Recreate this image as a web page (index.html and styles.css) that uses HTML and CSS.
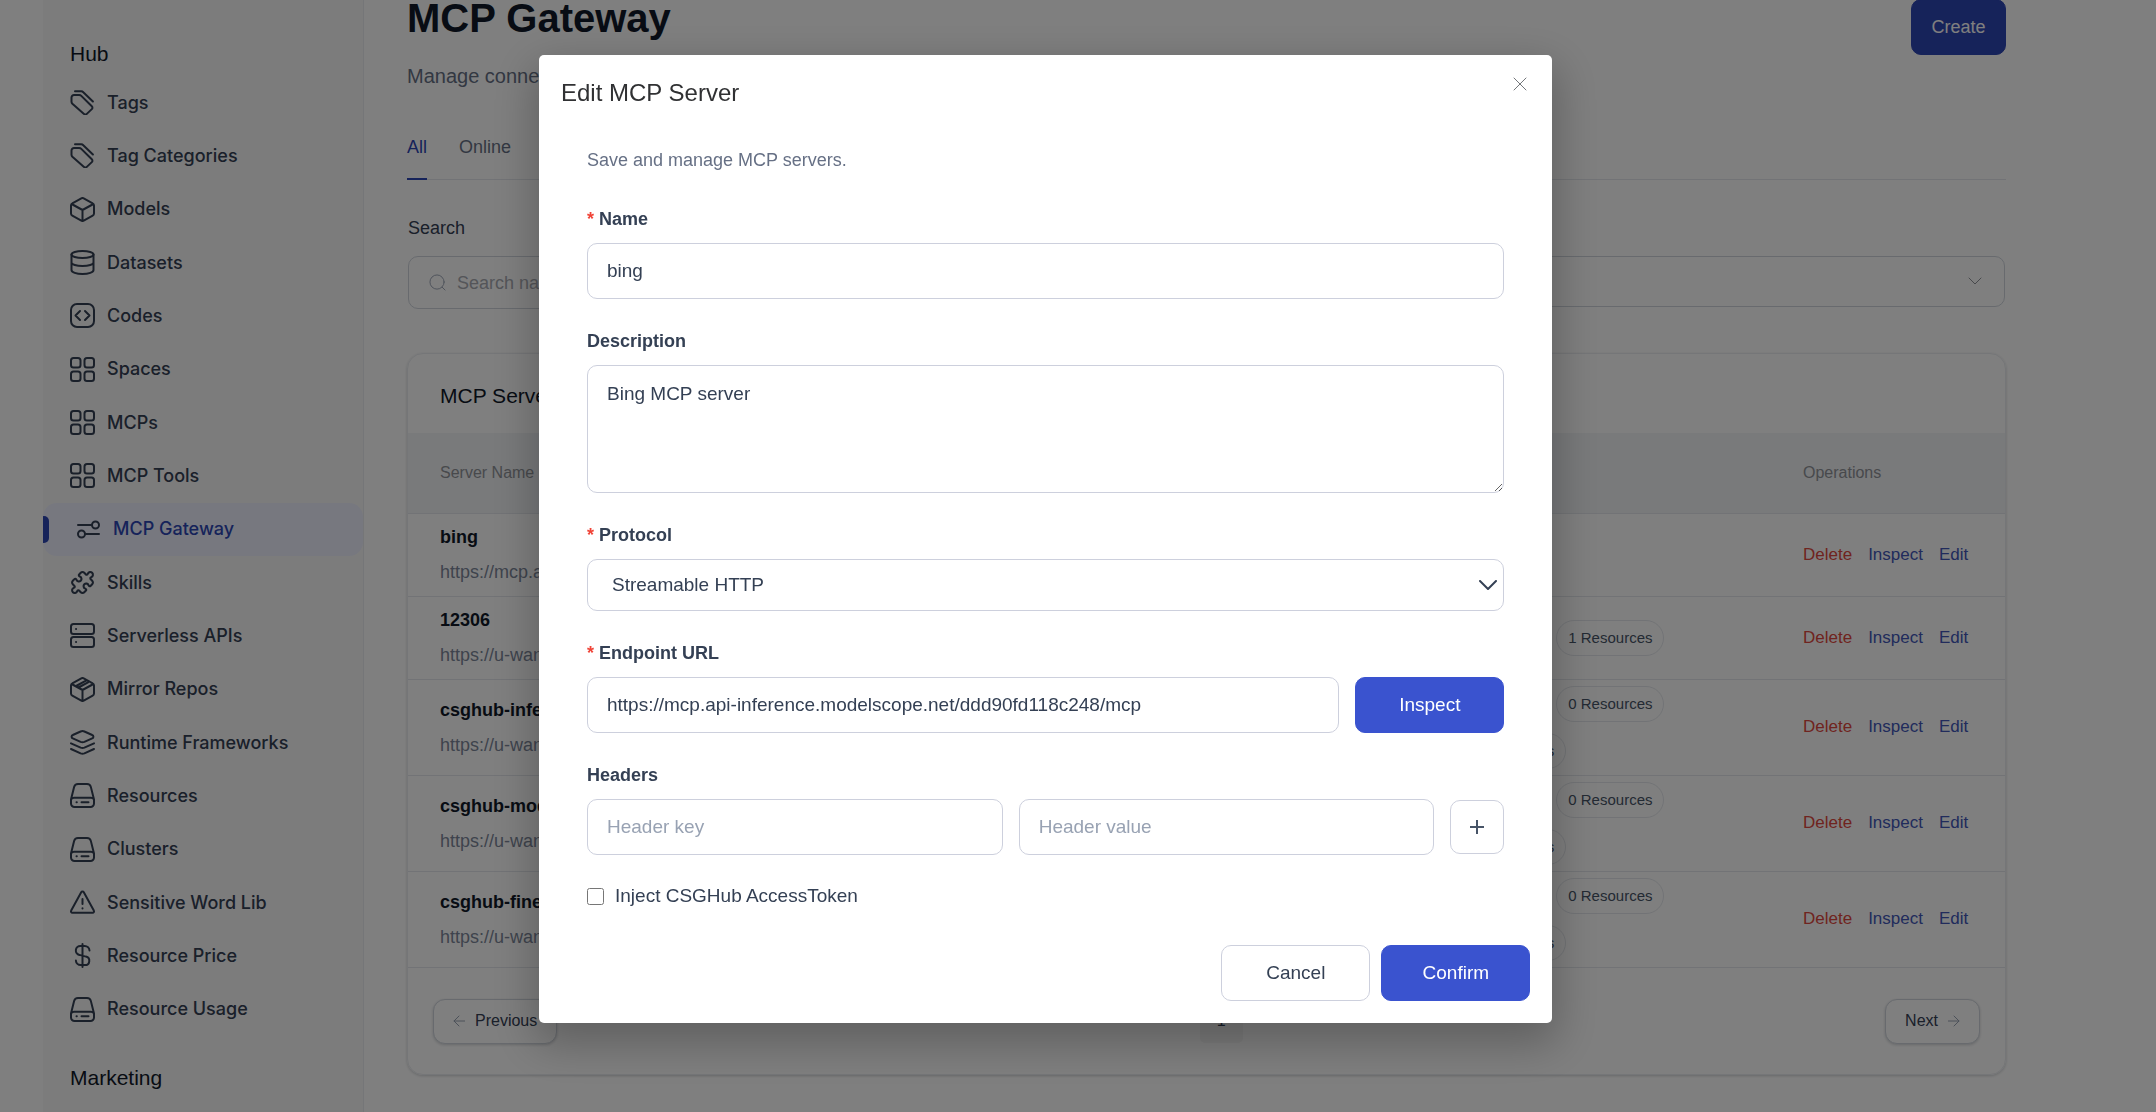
FILE: index.html
```html
<!DOCTYPE html>
<html lang="en">
<head>
<meta charset="utf-8">
<meta name="viewport" content="width=device-width, initial-scale=1">
<title>MCP Gateway</title>
<link rel="stylesheet" href="styles.css">
</head>
<body>
<svg class="sprite" aria-hidden="true">
  <symbol id="i-tag" viewBox="0 0 25 25"><path d="M1.5 7.5A2.5 2.5 0 0 1 4 5h5.2a3 3 0 0 1 2.1.9l10.5 10.3a2 2 0 0 1 0 2.9l-5 4.8a2 2 0 0 1-2.8 0L2.4 13.8a3 3 0 0 1-.9-2.1zM5 1.3h6.2a3 3 0 0 1 2.1.9l9.6 9.3"/></symbol>
  <symbol id="i-cube" viewBox="0 0 25 25"><path d="M11.3 1.3a2.5 2.5 0 0 1 2.4 0l9 5a2.4 2.4 0 0 1 1.3 2.1v8.2a2.4 2.4 0 0 1-1.3 2.1l-9 5a2.5 2.5 0 0 1-2.4 0l-9-5A2.4 2.4 0 0 1 1 16.600V8.400a2.400 2.400 0 0 1 1.300-2.100zM1.600 7l10.900 6 10.900-6M12.500 13v11.300"/></symbol>
  <symbol id="i-box" viewBox="0 0 25 25"><path d="M11.300 1.300a2.500 2.500 0 0 1 2.400 0l9 5a2.400 2.400 0 0 1 1.300 2.100v8.200a2.400 2.400 0 0 1-1.300 2.100l-9 5a2.500 2.500 0 0 1-2.400 0l-9-5A2.400 2.400 0 0 1 1 16.600V8.400a2.400 2.400 0 0 1 1.300-2.100zM1.600 7l10.900 6 10.900-6M12.500 13v11.300M7 9.800v-1.300L17 3.200M7 9.800l1.500.7 9.500-5.200"/></symbol>
  <symbol id="i-data" viewBox="0 0 25 25"><ellipse cx="12.500" cy="4.500" rx="11" ry="3.500"/><path d="M1.500 4.500v15.500c0 2.300 4.900 4 11 4s11-1.700 11-4V4.500M1.500 12.500c0 2 4.900 3.600 11 3.600s11-1.600 11-3.600"/></symbol>
  <symbol id="i-code" viewBox="0 0 25 25"><rect x="1" y="1" width="23" height="23" rx="6"/><path d="M10 8l-4.500 4.500L10 17M15 8l4.500 4.500L15 17"/></symbol>
  <symbol id="i-grid" viewBox="0 0 25 25"><rect x="1" y="1" width="9.500" height="9.500" rx="2.500"/><rect x="14.500" y="1" width="9.500" height="9.500" rx="2.500"/><rect x="1" y="14.500" width="9.500" height="9.500" rx="2.500"/><rect x="14.500" y="14.500" width="9.500" height="9.500" rx="2.500"/></symbol>
  <symbol id="i-sliders" viewBox="0 0 25 25"><circle cx="19.500" cy="8" r="3.500"/><circle cx="5.500" cy="17" r="3.500"/><path d="M2 8h14M9 17h14"/></symbol>
  <symbol id="i-puzzle" viewBox="0 0 24 24"><path d="M19.439 7.850c-.049.322.059.648.289.878l1.568 1.568c.470.470.706 1.087.706 1.704s-.235 1.233-.706 1.704l-1.611 1.611a.980.980 0 0 1-.837.276c-.470-.070-.802-.480-.968-.925a2.501 2.501 0 1 0-3.214 3.214c.446.166.855.497.925.968a.979.979 0 0 1-.276.837l-1.610 1.610a2.404 2.404 0 0 1-1.705.707 2.402 2.402 0 0 1-1.704-.706l-1.568-1.568a1.026 1.026 0 0 0-.877-.290c-.493.074-.840.504-1.020.968a2.500 2.500 0 1 1-3.237-3.237c.464-.180.894-.527.967-1.020a1.026 1.026 0 0 0-.289-.877l-1.568-1.568A2.402 2.402 0 0 1 1.998 12c0-.617.236-1.234.706-1.704L4.230 8.770c.240-.240.581-.353.917-.303.515.077.877.528 1.073 1.010a2.500 2.500 0 1 0 3.259-3.259c-.482-.196-.933-.558-1.010-1.073-.050-.336.062-.676.303-.917l1.525-1.525A2.402 2.402 0 0 1 12 1.998c.617 0 1.234.236 1.704.706l1.568 1.568c.230.230.556.338.877.290.493-.074.840-.504 1.020-.968a2.500 2.500 0 1 1 3.237 3.237c-.464.180-.894.527-.967 1.020Z"/></symbol>
  <symbol id="i-server" viewBox="0 0 25 25"><rect x="1" y="1" width="23" height="10" rx="2.500"/><rect x="1" y="14" width="23" height="10" rx="2.500"/><path d="M6 6h.1M6 19h.1"/></symbol>
  <symbol id="i-layers" viewBox="0 0 25 25"><path d="M10.600 1.500a5 5 0 0 1 3.800 0l7.800 3.500a1.800 1.800 0 0 1 0 3.400l-7.800 3.500a5 5 0 0 1-3.800 0L2.800 8.400a1.800 1.800 0 0 1 0-3.400zM1 13.300l9.600 4.400a5 5 0 0 0 3.800 0L24 13.300M1 19l9.600 4.400a5 5 0 0 0 3.800 0L24 19"/></symbol>
  <symbol id="i-drive" viewBox="0 0 25 25"><path d="M1 16.500L4.100 4.100A4 4 0 0 1 8 1h9a4 4 0 0 1 3.900 3.100L24 16.500v4a3.500 3.500 0 0 1-3.500 3.500h-16A3.500 3.500 0 0 1 1 20.500zM1.500 16A3 3 0 0 1 4 14.700h17a3 3 0 0 1 2.500 1.300M6.500 19.300h.3M11.500 19.300h7"/></symbol>
  <symbol id="i-alert" viewBox="0 0 25 25"><path d="M11.200 2.200a1.500 1.500 0 0 1 2.600 0L23.800 20.500a1.400 1.400 0 0 1-1.200 2.200H2.400a1.400 1.400 0 0 1-1.200-2.200zM12.500 9v5M12.500 18.300v.1"/></symbol>
  <symbol id="i-dollar" viewBox="0 0 25 25"><path d="M12.500 1v23M19.500 7.500a4.800 4.800 0 0 0-4.800-4.500h-4.200a4.500 4.500 0 0 0-1.100 8.900l6.500 1.700a4.300 4.300 0 0 1-1 8.500h-4.200a4.800 4.800 0 0 1-4.800-4.500"/></symbol>
</svg>

<div class="page">
  <nav class="sidebar" aria-label="Admin">
    <h2 class="nav-title">Hub</h2>
    <ul class="nav-list">
      <li><a class="nav-link" href="#tags"><svg class="icon"><use href="#i-tag"/></svg>Tags</a></li>
      <li><a class="nav-link" href="#tag-categories"><svg class="icon"><use href="#i-tag"/></svg>Tag Categories</a></li>
      <li><a class="nav-link" href="#models"><svg class="icon"><use href="#i-cube"/></svg>Models</a></li>
      <li><a class="nav-link" href="#datasets"><svg class="icon"><use href="#i-data"/></svg>Datasets</a></li>
      <li><a class="nav-link" href="#codes"><svg class="icon"><use href="#i-code"/></svg>Codes</a></li>
      <li><a class="nav-link" href="#spaces"><svg class="icon"><use href="#i-grid"/></svg>Spaces</a></li>
      <li><a class="nav-link" href="#mcps"><svg class="icon"><use href="#i-grid"/></svg>MCPs</a></li>
      <li><a class="nav-link" href="#mcp-tools"><svg class="icon"><use href="#i-grid"/></svg>MCP Tools</a></li>
      <li><a class="nav-link active" href="#mcp-gateway" aria-current="page"><svg class="icon"><use href="#i-sliders"/></svg>MCP Gateway</a></li>
      <li><a class="nav-link" href="#skills"><svg class="icon"><use href="#i-puzzle"/></svg>Skills</a></li>
      <li><a class="nav-link" href="#serverless"><svg class="icon"><use href="#i-server"/></svg>Serverless APIs</a></li>
      <li><a class="nav-link" href="#mirror"><svg class="icon"><use href="#i-box"/></svg>Mirror Repos</a></li>
      <li><a class="nav-link" href="#runtime"><svg class="icon"><use href="#i-layers"/></svg>Runtime Frameworks</a></li>
      <li><a class="nav-link" href="#resources"><svg class="icon"><use href="#i-drive"/></svg>Resources</a></li>
      <li><a class="nav-link" href="#clusters"><svg class="icon"><use href="#i-drive"/></svg>Clusters</a></li>
      <li><a class="nav-link" href="#words"><svg class="icon"><use href="#i-alert"/></svg>Sensitive Word Lib</a></li>
      <li><a class="nav-link" href="#price"><svg class="icon"><use href="#i-dollar"/></svg>Resource Price</a></li>
      <li><a class="nav-link" href="#usage"><svg class="icon"><use href="#i-drive"/></svg>Resource Usage</a></li>
    </ul>
    <h2 class="nav-title">Marketing</h2>
  </nav>

  <main class="main">
    <header class="head">
      <div>
        <h1 class="title">MCP Gateway</h1>
        <p class="subtitle">Manage connections</p>
      </div>
      <button class="btn primary create" type="button">Create</button>
    </header>
    <div class="tabs" role="tablist">
      <button class="tab on" type="button" role="tab" aria-selected="true">All</button>
      <button class="tab" type="button" role="tab" aria-selected="false">Online</button>
    </div>
    <div class="filters">
      <div class="filter">
        <label class="filter-label" for="search">Search</label>
        <div class="search">
          <svg class="search-icon" viewBox="0 0 18 18"><circle cx="8.500" cy="8.500" r="7.500"/><path d="M14 14l3 3"/></svg>
          <input class="search-input" id="search" type="search" placeholder="Search name">
        </div>
      </div>
      <div class="filter">
        <label class="filter-label" for="protocol-filter">Protocol</label>
        <div class="select-wrap">
          <select class="filter-select" id="protocol-filter"><option>All</option></select>
          <svg class="chev thin" viewBox="0 0 14 8"><path d="M1 1l6 6 6-6"/></svg>
        </div>
      </div>
    </div>

    <section class="card">
      <h2 class="card-title">MCP Servers</h2>
      <table class="table">
        <colgroup><col><col class="c-caps"><col class="c-ops"></colgroup>
        <thead><tr><th>Server Name</th><th>Items</th><th>Operations</th></tr></thead>
        <tbody>
          <tr><td><strong class="name">bing</strong><span class="url">https://mcp.api-inference.modelscope.net</span></td><td><div class="tags"><span class="tag">1 Tools</span></div></td><td><div class="ops"><a class="danger" href="#delete">Delete</a><a href="#inspect">Inspect</a><a href="#edit">Edit</a></div></td></tr>
          <tr><td><strong class="name">12306</strong><span class="url">https://u-wanghh</span></td><td><div class="tags"><span class="tag">8 Tools</span><span class="tag">1 Resources</span></div></td><td><div class="ops"><a class="danger" href="#delete">Delete</a><a href="#inspect">Inspect</a><a href="#edit">Edit</a></div></td></tr>
          <tr class="tall"><td><strong class="name">csghub-inference</strong><span class="url">https://u-wanghh</span></td><td><div class="tags"><span class="tag">8 Tools</span><span class="tag">0 Resources</span><span class="tag">0 Prompts</span></div></td><td><div class="ops"><a class="danger" href="#delete">Delete</a><a href="#inspect">Inspect</a><a href="#edit">Edit</a></div></td></tr>
          <tr class="tall"><td><strong class="name">csghub-model</strong><span class="url">https://u-wanghh</span></td><td><div class="tags"><span class="tag">8 Tools</span><span class="tag">0 Resources</span><span class="tag">0 Prompts</span></div></td><td><div class="ops"><a class="danger" href="#delete">Delete</a><a href="#inspect">Inspect</a><a href="#edit">Edit</a></div></td></tr>
          <tr class="tall"><td><strong class="name">csghub-finetune</strong><span class="url">https://u-wanghh</span></td><td><div class="tags"><span class="tag">8 Tools</span><span class="tag">0 Resources</span><span class="tag">0 Prompts</span></div></td><td><div class="ops"><a class="danger" href="#delete">Delete</a><a href="#inspect">Inspect</a><a href="#edit">Edit</a></div></td></tr>
        </tbody>
      </table>
      <div class="pager">
        <button class="page-btn" type="button"><svg class="arrow" viewBox="0 0 12 12"><path d="M12 6H1M6 1L1 6l5 5"/></svg>Previous</button>
        <button class="page-num" type="button">1</button>
        <button class="page-btn" type="button">Next<svg class="arrow" viewBox="0 0 12 12"><path d="M0 6h11M6 1l5 5-5 5"/></svg></button>
      </div>
    </section>
  </main>
</div>

<div class="overlay">
  <div class="dialog" role="dialog" aria-modal="true" aria-labelledby="dialog-title">
    <header class="dialog-head">
      <h2 class="dialog-title" id="dialog-title">Edit MCP Server</h2>
      <button class="close" type="button" aria-label="Close"><svg class="close-icon" viewBox="0 0 14 14"><path d="M1 1l12 12M13 1L1 13"/></svg></button>
    </header>
    <form class="form">
      <p class="intro">Save and manage MCP servers.</p>
      <div class="field">
        <label class="label required" for="name">Name</label>
        <input class="input" id="name" type="text" value="bing">
      </div>
      <div class="field">
        <label class="label" for="description">Description</label>
        <textarea class="input area" id="description">Bing MCP server</textarea>
      </div>
      <div class="field">
        <label class="label required" for="protocol">Protocol</label>
        <div class="select-wrap">
          <select class="input select" id="protocol"><option>Streamable HTTP</option><option>SSE</option></select>
          <svg class="chev" viewBox="0 0 18 10"><path d="M1 1l8 8 8-8"/></svg>
        </div>
      </div>
      <div class="field">
        <label class="label required" for="endpoint">Endpoint URL</label>
        <div class="row">
          <input class="input" id="endpoint" type="text" value="https://mcp.api-inference.modelscope.net/ddd90fd118c248/mcp">
          <button class="btn primary" type="button">Inspect</button>
        </div>
      </div>
      <div class="field">
        <label class="label" for="header-key">Headers</label>
        <div class="row">
          <input class="input" id="header-key" type="text" placeholder="Header key">
          <input class="input" type="text" placeholder="Header value" aria-label="Header value">
          <button class="add" type="button" aria-label="Add header"><svg class="add-icon" viewBox="0 0 14 14"><path d="M7 0v14M0 7h14"/></svg></button>
        </div>
      </div>
      <div class="check">
        <input class="check-box" id="inject" type="checkbox">
        <label for="inject">Inject CSGHub AccessToken</label>
      </div>
    </form>
    <footer class="dialog-foot">
      <button class="btn" type="button">Cancel</button>
      <button class="btn primary" type="button">Confirm</button>
    </footer>
  </div>
</div>
</body>
</html>
```
FILE: styles.css
```css
* { box-sizing: border-box; }

body {
  margin: 0;
  height: 100vh;
  overflow: hidden;
  background: #fff;
  color: #344054;
  font-family: "Liberation Sans", Arial, sans-serif;
  font-size: 18px;
  line-height: 24px;
}

h1, h2, p, ul { margin: 0; padding: 0; font-weight: 400; }
ul { list-style: none; }
a { color: inherit; text-decoration: none; }
button, input, select, textarea { font: inherit; color: inherit; }
button { cursor: pointer; }
svg { fill: none; stroke: currentColor; stroke-width: 2; stroke-linecap: round; stroke-linejoin: round; flex: none; }

.sprite { position: absolute; width: 0; height: 0; }

.page { display: flex; min-height: 100vh; padding-left: 43px; }

/* Sidebar */
.sidebar {
  flex: none;
  width: 321px;
  padding-top: 38px;
  background: #f9f9f9;
  border-right: 1px solid #eaecf0;
}
.nav-title { padding-left: 27px; color: #101828; font-size: 21px; line-height: 32px; }
.nav-list {
  display: grid;
  grid-auto-rows: 1fr;
  height: 960px;
  margin: 6px 0 26px;
}
.nav-list li { display: grid; }
.nav-link {
  display: flex;
  align-items: center;
  gap: 12px;
  padding-left: 27px;
  font-family: Inter, "Liberation Sans", sans-serif;
  font-weight: 500;
}
.icon { width: 25px; height: 25px; }
.nav-link.active {
  position: relative;
  padding-left: 33px;
  overflow: hidden;
  border-radius: 14px;
  background: #eef0ff;
  color: #2d46b4;
}
.nav-link.active .icon { color: #344054; }
.nav-link.active::before {
  content: "";
  position: absolute;
  left: 0;
  top: 13px;
  bottom: 13px;
  width: 6px;
  border-radius: 0 5px 5px 0;
  background: #2d46b4;
}

/* Main column */
.main { flex: 1; min-width: 0; padding: 0 150px 0 43px; }
.head { display: flex; justify-content: space-between; align-items: flex-start; }
.title { color: #101828; font-size: 40px; line-height: 36px; font-weight: 700; }
.subtitle { margin-top: 26px; color: #667085; font-size: 20px; line-height: 28px; }
.tabs { display: flex; gap: 32px; margin-top: 43px; border-bottom: 1px solid #e4e7ec; }
.tab {
  height: 47px;
  margin-bottom: -1px;
  padding: 0 0 18px;
  border: 0;
  border-bottom: 2px solid transparent;
  background: none;
  color: #667085;
}
.tab.on { color: #2d46b4; border-color: #2d46b4; }
.filters { display: grid; grid-template-columns: 1fr 1fr; gap: 32px; padding: 36px 1px 0; }
.filter-label { display: block; margin-bottom: 16px; }
.search, .filter-select { border: 1px solid #d0d5dd; border-radius: 10px; background: #fff; }
.search { display: flex; align-items: center; gap: 11px; height: 53px; padding: 0 20px; color: #98a2b3; }
.search-icon { width: 17px; height: 17px; stroke-width: 1; }
.search-input { flex: 1; min-width: 0; border: 0; padding: 0; background: none; outline: 0; }
.search-input::placeholder { color: #a8abb2; opacity: 1; }
.filter-select { width: 100%; height: 51px; padding: 0 20px; appearance: none; }

.card {
  margin-top: 44px;
  border: 1px solid #eaecf0;
  border-radius: 16px;
  box-shadow: 0 1px 3px rgba(16, 24, 40, .2);
}
.card-title { padding: 26px 32px 21px; color: #101828; font-size: 21px; line-height: 32px; }
.table { width: 100%; table-layout: fixed; border-collapse: collapse; }
.c-caps { width: 329px; }
.c-ops { width: 234px; }
.table th {
  height: 80px;
  padding: 0 32px;
  background: #f2f4f7;
  color: #909399;
  font-size: 16px;
  font-weight: 400;
  text-align: left;
}
.table th, .table td { border-bottom: 1px solid #e4e7ec; }
.table td { height: 83px; padding: 0 32px; }
.table .tall td { height: 96px; }
.name { display: block; margin-bottom: 11px; color: #101828; }
.url { display: block; color: #7d879a; white-space: nowrap; }
.tags { display: flex; flex-wrap: wrap; gap: 11px; }
.tag {
  padding: 0 11px;
  border: 1px solid #e4e7ec;
  border-radius: 18px;
  color: #475467;
  font-size: 15px;
  line-height: 34px;
}
.ops { display: flex; gap: 16px; color: #4257b8; font-size: 17px; }
.danger { color: #df4840; }
.pager { display: flex; justify-content: space-between; align-items: center; padding: 31px 25px 30px; }
.page-btn {
  display: flex;
  align-items: center;
  gap: 10px;
  height: 45px;
  padding: 0 19px;
  border: 1px solid #d0d5dd;
  border-radius: 12px;
  background: #fff;
  box-shadow: 0 1px 3px rgba(16, 24, 40, .2);
  font-size: 16px;
}
.arrow { width: 12px; height: 12px; stroke-width: 1; color: #98a2b3; }
.page-num { width: 43px; height: 43px; border: 0; border-radius: 5px; background: #f5f5f5; font-size: 16px; }

/* Shared controls */
.btn {
  width: 149px;
  height: 56px;
  padding: 0;
  border: 1px solid #cdd0dd;
  border-radius: 10px;
  background: #fff;
}
.btn.primary { border-color: #3a53cf; background: #3a53cf; color: #fff; }
.btn.create { width: 95px; margin-top: -1px; border-color: #2d46b4; background: #2d46b4; }
.select-wrap { position: relative; }
.chev {
  position: absolute;
  right: 7px;
  top: 50%;
  width: 18px;
  height: 10px;
  margin-top: -5px;
  pointer-events: none;
}
.chev.thin { right: 23px; width: 14px; height: 8px; stroke-width: 1; color: #909399; }

/* Dialog */
.overlay { position: fixed; inset: 0; background: rgba(0, 0, 0, .5); overflow: hidden; }
.dialog {
  width: 47%;
  margin: 55px 0 0 25%;
  padding: 22px;
  border-radius: 5px;
  background: #fff;
  box-shadow: 0 16px 44px 5px rgba(0, 0, 0, .25);
  font-size: 19px;
}
.dialog-head { display: flex; justify-content: space-between; align-items: flex-start; }
.dialog-title { color: #303133; font-size: 24px; line-height: 31px; }
.close { display: flex; padding: 0; margin: 0 3px 0; border: 0; background: none; color: #73767a; }
.close-icon { width: 14px; height: 14px; stroke-width: 1; }
.form { padding: 38px 26px 0; }
.intro { margin-bottom: 33px; color: #667085; line-height: 28px; font-size: 18px; }
.field { margin-bottom: 30px; }
.label { display: block; margin-bottom: 12px; font-size: 18px; font-weight: 700; }
.required::before { content: "*"; margin-right: 5px; color: #f04438; }
.input {
  display: block;
  width: 100%;
  min-width: 0;
  height: 56px;
  padding: 0 19px;
  border: 1px solid #cdd0dd;
  border-radius: 10px;
  background: #fff;
  outline: 0;
}
.input::placeholder { color: #98a2b3; opacity: 1; }
.area { height: 128px; padding: 16px 19px; resize: vertical; }
.select { height: 52px; padding: 0 24px; appearance: none; }
.row { display: flex; align-items: center; gap: 16px; }
.row .input { flex: 1; }
.row .btn { flex: none; }
.add {
  display: flex;
  align-items: center;
  justify-content: center;
  flex: none;
  width: 54px;
  height: 54px;
  border: 1px solid #cdd0dd;
  border-radius: 10px;
  background: #fff;
}
.add-icon { width: 14px; height: 14px; stroke-linecap: butt; color: #475467; }
.check { display: flex; align-items: center; gap: 11px; height: 28px; margin-top: -3px; }
.check-box { width: 17px; height: 17px; margin: 0; }
.dialog-foot { display: flex; justify-content: flex-end; gap: 11px; margin-top: 35px; }
```
